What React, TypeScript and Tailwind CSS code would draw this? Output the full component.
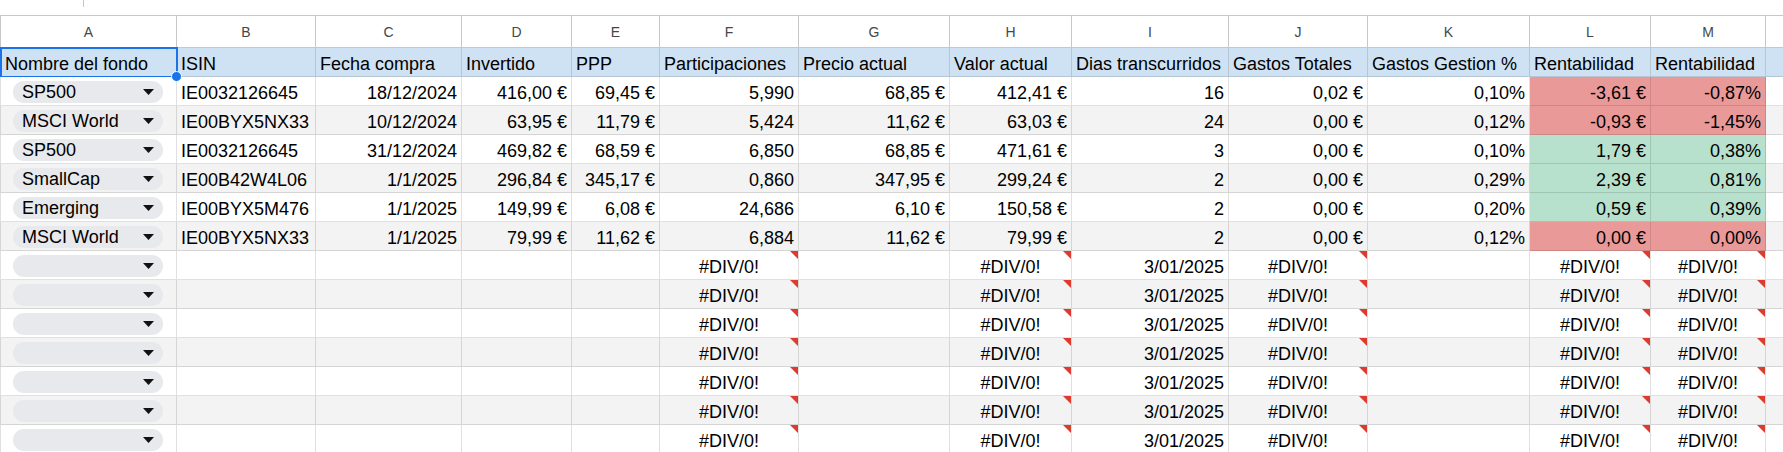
import React from "react"

type Col = { letter: string; width: string; align: "left" | "right" }

const columns: Col[] = [
  { letter: "A", width: "w-[177px] border-l", align: "left" },
  { letter: "B", width: "w-[139px]", align: "left" },
  { letter: "C", width: "w-[146px]", align: "right" },
  { letter: "D", width: "w-[110px]", align: "right" },
  { letter: "E", width: "w-[88px]", align: "right" },
  { letter: "F", width: "w-[139px]", align: "right" },
  { letter: "G", width: "w-[151px]", align: "right" },
  { letter: "H", width: "w-[122px]", align: "right" },
  { letter: "I", width: "w-[157px]", align: "right" },
  { letter: "J", width: "w-[139px]", align: "right" },
  { letter: "K", width: "w-[162px]", align: "right" },
  { letter: "L", width: "w-[121px]", align: "right" },
  { letter: "M", width: "w-[115px]", align: "right" },
]

const headers = [
  "Nombre del fondo",
  "ISIN",
  "Fecha compra",
  "Invertido",
  "PPP",
  "Participaciones",
  "Precio actual",
  "Valor actual",
  "Dias transcurridos",
  "Gastos Totales",
  "Gastos Gestion %",
  "Rentabilidad",
  "Rentabilidad",
]

type Fund = { values: string[]; gain: boolean }

const funds: Fund[] = [
  { values: ["SP500", "IE0032126645", "18/12/2024", "416,00 €", "69,45 €", "5,990", "68,85 €", "412,41 €", "16", "0,02 €", "0,10%", "-3,61 €", "-0,87%"], gain: false },
  { values: ["MSCI World", "IE00BYX5NX33", "10/12/2024", "63,95 €", "11,79 €", "5,424", "11,62 €", "63,03 €", "24", "0,00 €", "0,12%", "-0,93 €", "-1,45%"], gain: false },
  { values: ["SP500", "IE0032126645", "31/12/2024", "469,82 €", "68,59 €", "6,850", "68,85 €", "471,61 €", "3", "0,00 €", "0,10%", "1,79 €", "0,38%"], gain: true },
  { values: ["SmallCap", "IE00B42W4L06", "1/1/2025", "296,84 €", "345,17 €", "0,860", "347,95 €", "299,24 €", "2", "0,00 €", "0,29%", "2,39 €", "0,81%"], gain: true },
  { values: ["Emerging", "IE00BYX5M476", "1/1/2025", "149,99 €", "6,08 €", "24,686", "6,10 €", "150,58 €", "2", "0,00 €", "0,20%", "0,59 €", "0,39%"], gain: true },
  { values: ["MSCI World", "IE00BYX5NX33", "1/1/2025", "79,99 €", "11,62 €", "6,884", "11,62 €", "79,99 €", "2", "0,00 €", "0,12%", "0,00 €", "0,00%"], gain: false },
]

// formula columns that error out on empty rows
const errorCols = [5, 7, 9, 11, 12]

const Dropdown = ({ label }: { label: string }) => (
  <div className="ml-[8px] flex h-[22px] w-[150px] shrink-0 items-center justify-between rounded-full bg-[#e8e9ec] pl-[9px] pr-[9px]">
    <span className="pt-[1px]">{label}</span>
    <svg width="11" height="6" viewBox="0 0 11 6">
      <polygon points="0,0 11,0 5.5,6" fill="#111" />
    </svg>
  </div>
)

const ErrorFlag = () => (
  <div className="absolute right-0 top-0 h-0 w-0 border-l-[8px] border-t-[8px] border-l-transparent border-t-[#dc3b2d]"></div>
)

const Cell = ({
  col,
  bg,
  children,
  center,
  flag,
  chip,
}: {
  col: Col
  bg: string
  children?: React.ReactNode
  center?: boolean
  flag?: boolean
  chip?: boolean
}) => {
  const justify = center ? "justify-center" : col.align === "right" ? "justify-end" : "justify-start"
  const valign = chip ? "items-center pt-[1px]" : "items-end pb-[2px]"
  return (
    <div
      className={`relative flex h-full shrink-0 overflow-hidden whitespace-nowrap border-r border-b border-black/[0.12] px-[4px] ${valign} ${col.width} ${justify} ${bg}`}
    >
      {children}
      {flag && <ErrorFlag />}
    </div>
  )
}

export default function App() {
  const rowBg = (i: number) => (i % 2 === 0 ? "bg-white" : "bg-[#f3f3f3]")

  return (
    <div
      className="h-[452px] w-[1783px] overflow-hidden bg-white text-[18px] leading-[20px] text-black"
      style={{ fontFamily: '"Liberation Sans", Arial, sans-serif' }}
    >
      {/* bottom edge of the formula bar */}
      <div className="flex h-[15px] items-start">
        <div className="ml-[83px] h-[7px] w-px bg-[#c4c7c5]"></div>
      </div>

      {/* column letters */}
      <div className="flex h-[33px] border-y border-[#c7c7c7]">
        {columns.map((c) => (
          <div
            key={c.letter}
            className={`flex h-full shrink-0 items-center justify-center border-r border-[#c7c7c7] text-[14px] text-[#444746] ${c.width}`}
          >
            {c.letter}
          </div>
        ))}
        <div className="h-full flex-1"></div>
      </div>

      {/* header row */}
      <div className="relative flex h-[29px]">
        {columns.map((c, i) => (
          <Cell key={c.letter} col={{ ...c, align: "left" }} bg="bg-[#cfe2f3]">
            {headers[i]}
          </Cell>
        ))}
        <div className="h-full flex-1 border-b border-black/[0.12] bg-[#cfe2f3]"></div>
        {/* selected cell A1 */}
        <div className="pointer-events-none absolute -top-[1px] left-0 h-[31px] w-[178px] border-2 border-[#1a73e8]"></div>
        <div className="absolute left-[171px] top-[23px] z-10 h-[11px] w-[11px] rounded-full border border-white bg-[#1a73e8]"></div>
      </div>

      {/* fund rows */}
      {funds.map((f, r) => (
        <div key={r} className="flex h-[29px]">
          {columns.map((c, i) => {
            let bg = rowBg(r)
            if (i >= 11) bg = f.gain ? "bg-[#b7e1cd]" : "bg-[#ea9999]"
            return (
              <Cell key={c.letter} col={c} bg={bg} chip={i === 0}>
                {i === 0 ? <Dropdown label={f.values[0]} /> : f.values[i]}
              </Cell>
            )
          })}
          <div className={`h-full flex-1 border-b border-black/[0.12] ${rowBg(r)}`}></div>
        </div>
      ))}

      {/* empty rows with formulas */}
      {Array.from({ length: 7 }).map((_, k) => {
        const r = funds.length + k
        return (
          <div key={r} className="flex h-[29px]">
            {columns.map((c, i) => {
              const isError = errorCols.includes(i)
              return (
                <Cell key={c.letter} col={c} bg={rowBg(r)} center={isError} flag={isError} chip={i === 0}>
                  {i === 0 && <Dropdown label="" />}
                  {isError && "#DIV/0!"}
                  {i === 8 && "3/01/2025"}
                </Cell>
              )
            })}
            <div className={`h-full flex-1 border-b border-black/[0.12] ${rowBg(r)}`}></div>
          </div>
        )
      })}
    </div>
  )
}
